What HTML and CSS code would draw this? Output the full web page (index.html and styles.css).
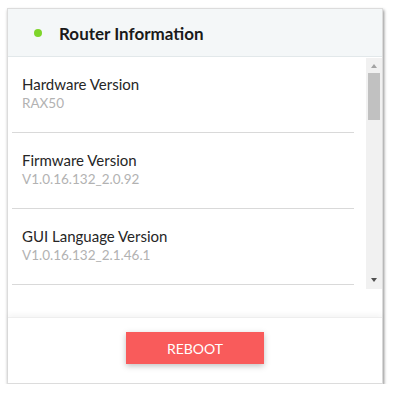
FILE: index.html
```html
<!DOCTYPE html>
<html lang="en">
<head>
  <meta charset="UTF-8" />
  <meta name="viewport" content="width=device-width, initial-scale=1.0" />
  <title>Router Information</title>
  <link rel="stylesheet" href="styles.css">
</head>
<body>

  <div class="card">
    <div class="card-header">
      <span class="status-dot"></span>
      <h2>Router Information</h2>
    </div>

    <div class="card-body">
      <div class="info-scroll">
        <ul class="info-list">
          <li>
            <div class="label">Hardware Version</div>
            <div class="value">RAX50</div>
          </li>
          <li>
            <div class="label">Firmware Version</div>
            <div class="value">V1.0.16.132_2.0.92</div>
          </li>
          <li>
            <div class="label">GUI Language Version</div>
            <div class="value">V1.0.16.132_2.1.46.1</div>
          </li>
        </ul>

        <!-- fake scrollbar -->
        <div class="scrollbar">
          <span class="sb-arrow sb-up"></span>
          <div class="sb-track">
            <div class="sb-thumb"></div>
          </div>
          <span class="sb-arrow sb-down"></span>
        </div>
      </div>
    </div>

    <div class="card-footer">
      <button class="btn-reboot">REBOOT</button>
    </div>
  </div>

</body>
</html>
```

FILE: styles.css
```css
/* Reset */
* {
  margin: 0;
  padding: 0;
  box-sizing: border-box;
}

body {
  font-family: 'Lato', 'Open Sans', sans-serif;
  background: #fff;
  color: #222;
}

/* Card */
.card {
  width: 376px;
  height: 376px;
  margin: 8px 0 0 7px;
  background: #fff;
  border: 1px solid #dcdcdc;
  box-shadow: 1px 2px 3px rgba(0, 0, 0, 0.45);
  display: flex;
  flex-direction: column;
}

.card-header {
  height: 48px;
  background: #f4f7f8;
  border-bottom: 1px solid #e2e8ea;
  display: flex;
  align-items: center;
  padding: 1px 0 0 26px;
  gap: 17px;
  flex-shrink: 0;
}

.status-dot {
  width: 8px;
  height: 8px;
  border-radius: 50%;
  background: #7ed52a;
}

.card-header h2 {
  font-size: 17px;
  font-weight: 700;
  color: #1a1a1a;
}

/* Body */
.card-body {
  flex: 1;
  padding-bottom: 28px;
}

.info-scroll {
  height: 232px;
  display: flex;
}

.info-list {
  list-style: none;
  flex: 1;
  overflow: hidden;
  margin: 0 12px 0 4px;
}

.info-list li {
  padding: 18px 0 21px 10px;
  border-bottom: 1px solid #d9d9d9;
}

.label {
  font-size: 15px;
  line-height: 18px;
  color: #262626;
}

.value {
  margin-top: 2px;
  font-size: 13.5px;
  line-height: 16px;
  color: #b2b2b2;
}

/* Scrollbar */
.scrollbar {
  width: 16px;
  margin-top: 1px;
  background: #f1f1f1;
  display: flex;
  flex-direction: column;
  align-items: center;
}

.sb-arrow {
  width: 0;
  height: 0;
  border-left: 3.5px solid transparent;
  border-right: 3.5px solid transparent;
}

.sb-up {
  margin-top: 6px;
  border-bottom: 4px solid #a3a3a3;
}

.sb-down {
  margin: 0 0 7px;
  border-top: 4px solid #505050;
}

.sb-track {
  flex: 1;
  width: 100%;
  padding: 5px 2px 0;
}

.sb-thumb {
  height: 47px;
  background: #c1c1c1;
}

/* Footer */
.card-footer {
  height: 66px;
  border-top: 1px solid #eeeeee;
  box-shadow: 0 -3px 5px rgba(0, 0, 0, 0.04);
  display: flex;
  justify-content: center;
  padding-top: 14px;
}

.btn-reboot {
  width: 138px;
  height: 32px;
  border: none;
  background: #f95b5b;
  color: #fff;
  font-family: inherit;
  font-size: 14px;
  box-shadow: 0 2px 6px rgba(0, 0, 0, 0.25);
  cursor: pointer;
}
```
